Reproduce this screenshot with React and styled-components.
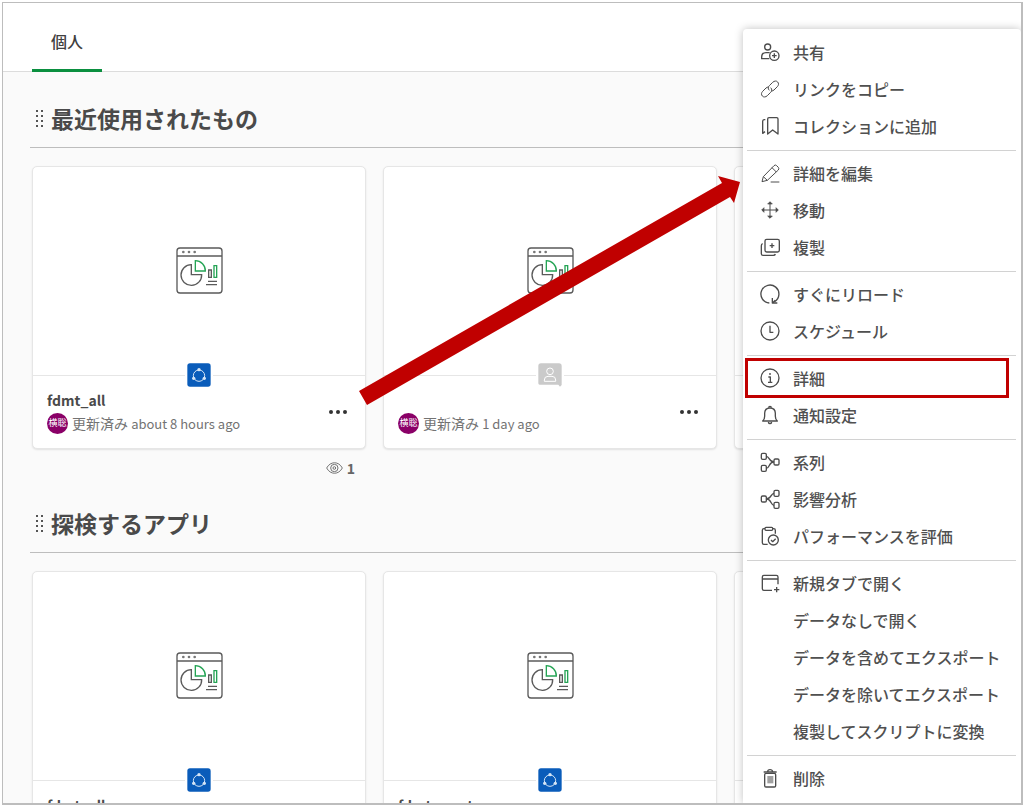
import React from "react";
import styled, { createGlobalStyle } from "styled-components";

const GlobalStyle = createGlobalStyle`
  *, *::before, *::after { box-sizing: border-box; }
  body {
    margin: 0;
    background: #fff;
    color: #404040;
    font-family: "Noto Sans CJK JP", "Noto Sans", sans-serif;
    font-size: 16px;
    line-height: 24px;
  }
  button { font: inherit; color: inherit; background: none; border: 0; padding: 0; cursor: pointer; }
`;

const Viewport = styled.div`
  height: 100vh;
  padding: 2px 1px 2px 2px;
`;

const Frame = styled.div`
  position: relative;
  height: 100%;
  overflow: hidden;
  border: 1px solid #bdbdbd;
  border-width: 1px 2px 2px 1px;
  background: #fafafa;
`;

const Header = styled.header`
  display: flex;
  height: 69px;
  padding-left: 29px;
  background: #fff;
  border-bottom: 1px solid #dcdcdc;
`;

const Tab = styled.button`
  height: 69px;
  padding: 10px 19px 0;
  border-bottom: 3px solid #0a8f3f;
  font-weight: 500;
`;

const Section = styled.section`
  height: 405px;
  padding: 24px 0 0 27px;
`;

const SectionHeader = styled.div`
  display: flex;
  align-items: center;
  gap: 7px;
  height: 52px;
  padding: 0 0 8px 6px;
  border-bottom: 1px solid #bdbdbd;
`;

const SectionTitle = styled.h2`
  margin: 0;
  font-size: 23px;
  line-height: 32px;
  font-weight: 700;
  color: #4a4a4a;
`;

const CardRow = styled.div`
  display: grid;
  grid-auto-flow: column;
  grid-auto-columns: 334px;
  gap: 17px;
  padding: 18px 0 0 2px;
`;

const Card = styled.article`
  height: 283px;
  display: flex;
  flex-direction: column;
  background: #fff;
  border: 1px solid #e6e6e6;
  border-radius: 5px;
  box-shadow: 0 1px 2px rgba(0, 0, 0, 0.1);
`;

const Preview = styled.div`
  position: relative;
  flex: 1;
  display: flex;
  align-items: center;
  justify-content: center;
  padding-bottom: 2px;
  border-bottom: 1px solid #e6e6e6;
`;

const Badge = styled.span`
  position: absolute;
  bottom: -14px;
  left: 50%;
  display: flex;
  padding: 2px;
  background: #fff;
  transform: translateX(-50%);
`;

const CardFooter = styled.div`
  display: flex;
  align-items: flex-start;
  justify-content: space-between;
  height: 72px;
  padding: 12px 16px 0 14px;
`;

const CardTitle = styled.h3`
  height: 24px;
  margin: 0;
  font-size: 14px;
  font-weight: 700;
  color: #4a4a4a;
`;

const Updated = styled.p`
  display: flex;
  align-items: center;
  gap: 4px;
  height: 22px;
  margin: 0;
  font-size: 14px;
  line-height: 22px;
  color: #737373;
`;

const Avatar = styled.span`
  display: flex;
  align-items: center;
  justify-content: center;
  width: 21px;
  height: 21px;
  border-radius: 50%;
  background: #8a0067;
  color: #fff;
  font-size: 9px;
  line-height: 12px;
`;

const Age = styled.time`
  font-size: 13px;
`;

const MoreButton = styled.button`
  display: flex;
  align-items: center;
  height: 48px;
`;

const Views = styled.div`
  display: flex;
  align-items: center;
  justify-content: flex-end;
  gap: 4px;
  height: 24px;
  margin-top: 7px;
  padding-right: 11px;
  font-size: 14px;
  font-weight: 700;
  color: #666;
`;

const Menu = styled.nav`
  position: absolute;
  top: 26px;
  right: 0;
  bottom: 0;
  width: 278px;
  padding-top: 5px;
  background: #fff;
  border-radius: 4px 4px 0 0;
  box-shadow: 0 0 8px rgba(0, 0, 0, 0.25);
`;

const MenuGroup = styled.div`
  margin: 0 5px 0 4px;

  & + & {
    margin-top: 5px;
    padding-top: 4px;
    border-top: 1px solid #d2d2d2;
  }
`;

const MenuItem = styled.button`
  position: relative;
  display: flex;
  align-items: center;
  gap: 13px;
  width: 100%;
  height: 37px;
  padding: 0 0 2px 13px;
  font-weight: 500;
  color: #505050;
  text-align: left;
  white-space: nowrap;
`;

const IconSlot = styled.span`
  display: flex;
  width: 20px;
  height: 20px;
  flex: none;
`;

const Highlight = styled.span`
  position: absolute;
  inset: -2px 7px -1px -2px;
  border: 3px solid #c00000;
`;

const ArrowOverlay = styled.svg`
  position: absolute;
  top: 172px;
  left: 355px;
  pointer-events: none;
`;

const ICONS = {
  share: (
    <>
      <circle cx="23" cy="15" r="9" />
      <path d="M28 50H5V45C5 37 10 32 18 32H29" />
      <circle cx="43" cy="41" r="14" />
      <path d="M43 34V48M36 41H50" />
    </>
  ),
  link: (
    <g strokeWidth="3">
      <path d="M28 34C23 29 24 24 28 20L38 10C43 5 50 5 53 9C57 13 56 19 52 23L42 33C40 35 37 36 34 36" />
      <path d="M32 26C37 31 36 36 32 40L22 50C17 55 10 55 7 51C3 47 4 41 8 37L18 27C20 25 23 24 26 24" />
    </g>
  ),
  collection: (
    <>
      <path d="M23 9Q23 5 27 5H50Q54 5 54 9V54L38 42L23 54Z" />
      <path d="M16 11H13Q8 11 8 16V52L15 47" />
    </>
  ),
  edit: (
    <g strokeWidth="3">
      <path d="M6 56L10 41L42 8Q46 4 50 8L55 13Q58 17 55 21L22 52Z" />
      <path d="M36 14L49 27M10 41L22 52M32 57H58" />
    </g>
  ),
  move: (
    <>
      <path d="M30 7V53M7 30H53" strokeWidth="3" />
      <path d="M23 12L30 5L37 12ZM23 48L30 55L37 48ZM12 23L5 30L12 37ZM48 23L55 30L48 37Z" fill="#4c4c4c" strokeWidth="2" />
    </>
  ),
  duplicate: (
    <>
      <rect x="15" y="7" width="43" height="38" rx="5" />
      <path d="M36 19V33M29 26H43M8 20Q4 21 4 26V50Q4 55 9 55H40Q45 55 46 51" />
    </>
  ),
  reload: <path d="M28 57A27 27 0 1 1 44 53M37 42V57H52M37 57L46 49" />,
  clock: (
    <>
      <circle cx="30" cy="30" r="27" />
      <path d="M30 14V34H40" />
    </>
  ),
  info: (
    <>
      <circle cx="30" cy="30" r="27" />
      <path d="M25 27H31V43M24 43H37" />
      <circle cx="30" cy="18" r="1" />
    </>
  ),
  bell: (
    <>
      <path d="M8 48C13 44 14 39 14 34V25C14 15 20 9 30 9S46 15 46 25V34C46 39 47 44 52 48Z" />
      <path d="M26 8Q26 4 30 4T34 8M25 51Q26 56 30 56T35 51" />
    </>
  ),
  lineage: (
    <>
      <rect x="4" y="4" width="15" height="18" rx="4" />
      <rect x="4" y="40" width="15" height="18" rx="4" />
      <rect x="42" y="21" width="15" height="18" rx="4" />
      <path d="M19 13C29 13 26 30 42 30M19 49C29 49 26 30 42 30" />
    </>
  ),
  impact: (
    <>
      <rect x="42" y="4" width="15" height="18" rx="4" />
      <rect x="42" y="40" width="15" height="18" rx="4" />
      <rect x="4" y="21" width="15" height="18" rx="4" />
      <path d="M42 13C32 13 35 30 19 30M42 49C32 49 35 30 19 30" />
    </>
  ),
  performance: (
    <>
      <path d="M23 55H12Q7 55 7 50V13Q7 8 12 8H15M38 8H41Q46 8 46 13V23" />
      <rect x="15" y="4" width="23" height="9" rx="3" />
      <circle cx="40" cy="42" r="15" />
      <path d="M33 42L38 47L47 38" />
    </>
  ),
  newTab: <path d="M36 52H12Q7 52 7 47V12Q7 7 12 7H49Q54 7 54 12V34M7 18H54M50 42V58M42 50H58" />,
  trash: (
    <>
      <rect x="14" y="16" width="33" height="41" rx="4" />
      <path d="M11 12H50M23 11Q23 5 30 5T38 11" />
      <rect x="22" y="24" width="18" height="22" fill="#a0a0a0" stroke="none" />
    </>
  ),
};

function MenuIcon({ name }) {
  return (
    <IconSlot>
      {name && (
        <svg width="20" height="20" viewBox="0 0 60 60" fill="none" stroke="#4c4c4c" strokeWidth="4" strokeLinejoin="round" aria-hidden="true">
          {ICONS[name]}
        </svg>
      )}
    </IconSlot>
  );
}

function AppIcon() {
  return (
    <svg width="47" height="47" viewBox="0 0 141 141" fill="none" stroke="#5a5a5a" strokeWidth="4" aria-hidden="true">
      <rect x="3" y="3" width="135" height="135" rx="9" />
      <path d="M3 27H138" />
      <g fill="#777" stroke="none">
        <circle cx="22" cy="15" r="4" />
        <circle cx="39" cy="15" r="4" />
        <circle cx="56" cy="15" r="4" />
      </g>
      <path d="M46 53A31 31 0 1 0 77 83H46Z" />
      <path d="M98 69H106V91H98ZM96 103H123M90 113H123" />
      <path d="M58 41V72H88A30 30 0 0 0 58 41ZM114 56H122V91H114Z" stroke="#25a455" />
    </svg>
  );
}

function SpaceBadge({ kind }) {
  return (
    <Badge>
      {kind === "shared" ? (
        <svg width="24" height="24" viewBox="0 0 72 72" role="img" aria-label="共有スペース">
          <rect x="1" y="1" width="70" height="70" rx="8" fill="#0a5cba" />
          <circle cx="36" cy="38" r="17" fill="none" stroke="#d5e5f6" strokeWidth="3" />
          <g fill="#d5e5f6">
            <circle cx="36" cy="20" r="5" />
            <circle cx="20" cy="46" r="5" />
            <circle cx="52" cy="46" r="5" />
          </g>
        </svg>
      ) : (
        <svg width="24" height="24" viewBox="0 0 72 72" role="img" aria-label="個人スペース">
          <path d="M9 1H63Q71 1 71 9V66L66 71L61 65H5Q1 65 1 61V9Q1 1 9 1Z" fill="#cacaca" />
          <g fill="none" stroke="#fff" strokeWidth="3">
            <circle cx="36" cy="25" r="10" />
            <path d="M19 55V51Q19 40 30 40H42Q53 40 53 51V55Z" />
          </g>
        </svg>
      )}
    </Badge>
  );
}

function AppCard({ app }) {
  return (
    <div>
      <Card>
        <Preview>
          {app.space && <AppIcon />}
          {app.space && <SpaceBadge kind={app.space} />}
        </Preview>
        <CardFooter>
          {app.space && (
            <div>
              <CardTitle>{app.name}</CardTitle>
              {app.updated && (
                <Updated>
                  <Avatar>横聡</Avatar>
                  <span>
                    更新済み <Age>{app.updated}</Age>
                  </span>
                </Updated>
              )}
            </div>
          )}
          {app.updated && (
            <MoreButton aria-label="その他のアクション">
              <svg width="22" height="8" viewBox="0 0 22 8" fill="#333" aria-hidden="true">
                <circle cx="4" cy="4" r="2" />
                <circle cx="11" cy="4" r="2" />
                <circle cx="18" cy="4" r="2" />
              </svg>
            </MoreButton>
          )}
        </CardFooter>
      </Card>
      {app.views && (
        <Views>
          <svg width="17" height="14" viewBox="0 0 51 42" fill="none" stroke="#737373" strokeWidth="3" aria-hidden="true">
            <path d="M2 21C13 0 38 0 49 21C38 42 13 42 2 21Z" />
            <circle cx="25" cy="21" r="11" />
            <circle cx="25" cy="21" r="4" />
          </svg>
          {app.views}
        </Views>
      )}
    </div>
  );
}

function DragHandle() {
  return (
    <svg width="8" height="18" viewBox="0 0 8 18" fill="#555" aria-hidden="true">
      {[1, 6, 11, 16].map((y) => (
        <React.Fragment key={y}>
          <rect x="0" y={y} width="2" height="2" />
          <rect x="5" y={y} width="2" height="2" />
        </React.Fragment>
      ))}
    </svg>
  );
}

const SECTIONS = [
  {
    title: "最近使用されたもの",
    apps: [
      { name: "fdmt_all", space: "shared", updated: "about 8 hours ago", views: 1 },
      { name: "", space: "personal", updated: "1 day ago" },
      {},
    ],
  },
  {
    title: "探検するアプリ",
    apps: [{ name: "fdmt_all", space: "shared" }, { name: "fdmt_mart", space: "shared" }, {}],
  },
];

const MENU = [
  [["share", "共有"], ["link", "リンクをコピー"], ["collection", "コレクションに追加"]],
  [["edit", "詳細を編集"], ["move", "移動"], ["duplicate", "複製"]],
  [["reload", "すぐにリロード"], ["clock", "スケジュール"]],
  [["info", "詳細", true], ["bell", "通知設定"]],
  [["lineage", "系列"], ["impact", "影響分析"], ["performance", "パフォーマンスを評価"]],
  [
    ["newTab", "新規タブで開く"],
    [null, "データなしで開く"],
    [null, "データを含めてエクスポート"],
    [null, "データを除いてエクスポート"],
    [null, "複製してスクリプトに変換"],
  ],
  [["trash", "削除"]],
];

export default function App() {
  return (
    <Viewport>
      <GlobalStyle />
      <Frame>
        <Header>
          <Tab>個人</Tab>
        </Header>
        <main>
          {SECTIONS.map((section) => (
            <Section key={section.title}>
              <SectionHeader>
                <DragHandle />
                <SectionTitle>{section.title}</SectionTitle>
              </SectionHeader>
              <CardRow>
                {section.apps.map((app, i) => (
                  <AppCard key={i} app={app} />
                ))}
              </CardRow>
            </Section>
          ))}
        </main>
        <Menu aria-label="アプリのアクション">
          {MENU.map((group, i) => (
            <MenuGroup key={i}>
              {group.map(([icon, label, highlighted]) => (
                <MenuItem key={label}>
                  <MenuIcon name={icon} />
                  {label}
                  {highlighted && <Highlight />}
                </MenuItem>
              ))}
            </MenuGroup>
          ))}
        </Menu>
        <ArrowOverlay width="384" height="234" viewBox="358 175 384 234" aria-hidden="true">
          <path d="M359 391L722 183L718 176L740 182L734 203L730 197L367 405Z" fill="#c00000" />
        </ArrowOverlay>
      </Frame>
    </Viewport>
  );
}
